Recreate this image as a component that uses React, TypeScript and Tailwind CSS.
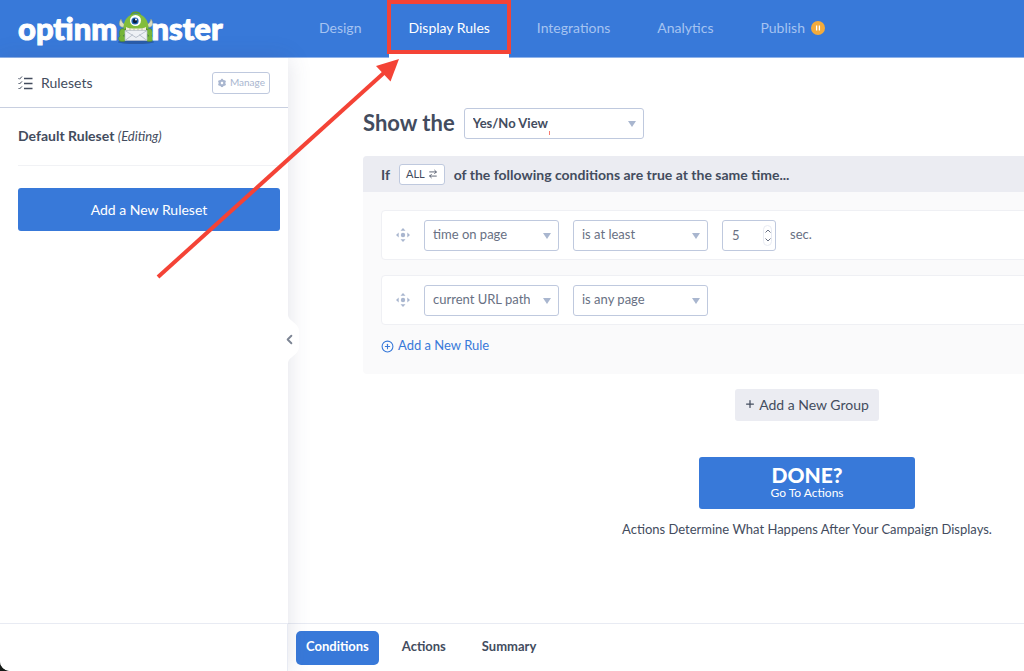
import { useState } from "react";
import type { ReactNode, SelectHTMLAttributes } from "react";
import { LuArrowRightLeft, LuChevronLeft, LuCirclePlus } from "react-icons/lu";
import { FaPlus } from "react-icons/fa6";
import { RiSettings3Fill } from "react-icons/ri";

interface tabProps {
  name: string;
  paused?: boolean;
}

const tabs: tabProps[] = [
  { name: "Design" },
  { name: "Display Rules" },
  { name: "Integrations" },
  { name: "Analytics" },
  { name: "Publish", paused: true },
];

const steps = ["Conditions", "Actions", "Summary"];

const Monster = () => (
  <svg viewBox="0 0 38 34" className="-mr-1 h-[34px] w-[38px] shrink-0" aria-hidden="true">
    <ellipse cx="19" cy="31" rx="18" ry="2" fill="#2a5ca8" />
    <path d="M14 4.500c1-4 8-4 9-1" fill="none" stroke="#5f9e2e" strokeWidth="1.600" strokeLinecap="round" />
    <path d="M4 8c-3 4-2 9 3 8l1-3c-2 0-3-2-4-5zM34 8c3 4 2 9-3 8l-1-3c2 0 3-2 4-5z" fill="#d9dcc0" stroke="#8c9b70" strokeWidth=".5" />
    <path d="M19 3c8 0 12 6 12.500 13 .5 6-1 10-2 12H8.500c-1.500-3-2.500-7-2-12C7 9 11 3 19 3z" fill="#82bd3c" />
    <path d="M8 17c3 3 19 3 22 0l1 8H7z" fill="#5d9430" />
    <path d="M9 16c3 2 17 2 20 0v3c-3 2-17 2-20 0z" fill="#f2eedb" />
    <path d="M13 17v3M17 17.500v3M21 17.500v3M25 17v3" stroke="#a9ad8c" strokeWidth=".7" />
    <circle cx="18.500" cy="9.500" r="5.500" fill="#fff" />
    <circle cx="18" cy="10" r="3.600" fill="#1d61b5" />
    <circle cx="18" cy="10" r="2.200" fill="#0b1d38" />
    <circle cx="19" cy="8.500" r="1" fill="#fff" />
    <path d="M4 18c3-1 5 1 5 4l-3 3c2 0 4 2 3 4-1 2-6 2-7 0s0-3 1-4c-1-2-1-5 1-7zM34 18c-3-1-5 1-5 4l3 3c-2 0-4 2-3 4 1 2 6 2 7 0s0-3-1-4c1-2 1-5-1-7z" fill="#76b539" stroke="#4a822b" strokeWidth=".6" />
    <path d="M8 19.500h22v10H8z" fill="#eef1f5" stroke="#b5bdca" strokeWidth=".7" />
    <path d="M8 29.500l8-6M30 29.500l-8-6M8 19.500l11 7 11-7" fill="none" stroke="#b5bdca" strokeWidth=".9" />
  </svg>
);

const RulesIcon = () => (
  <svg viewBox="0 0 15 14" className="h-[14px] w-[15px]" fill="none" stroke="#434c5e" aria-hidden="true">
    <path d="M6 2.500h8.500M6 7.500h8.500M6 12.500h8.500" strokeWidth="1.500" />
    <path d="M.5 2.200l1 1L4 .5M.5 7l1 1L4 5.400M.5 12l1 1L4 10.400" strokeWidth="1" />
  </svg>
);

const MoveIcon = () => (
  <svg viewBox="0 0 14 14" className="h-[14px] w-[14px]" fill="#a9b6cf" aria-hidden="true">
    <circle cx="7" cy="7" r="2.200" />
    <path d="M7 0l2.500 2.700H4.500zM7 14l2.500-2.700H4.500zM0 7l2.700-2.500v5zM14 7l-2.700-2.500v5z" />
  </svg>
);

const Select = ({ className, children, ...props }: SelectHTMLAttributes<HTMLSelectElement>) => (
  <div className={`relative ${className}`}>
    <select
      {...props}
      className="h-[31px] w-full appearance-none rounded-[3px] border border-[#bfc9de] bg-white pr-7 pl-2 text-inherit"
    >
      {children}
    </select>
    <svg viewBox="0 0 8 6" className="pointer-events-none absolute top-[13px] right-2 h-[6px] w-[8px]" fill="#a9b6cf" aria-hidden="true">
      <path d="M0 0h8L4 6z" />
    </svg>
  </div>
);

const Rule = ({ children }: { children: ReactNode }) => (
  <li className="flex h-[50px] items-center rounded-[4px] border border-[#eff0f4] bg-white pl-[14px]">
    <button type="button" aria-label="Move rule" className="mr-[14px]">
      <MoveIcon />
    </button>
    {children}
  </li>
);

const App = () => {
  const [seconds, setSeconds] = useState(5);

  return (
    <div className="bg-[#151a17] font-[Lato,sans-serif] text-[#434c5e]">
      <div className="relative flex min-h-screen flex-col overflow-hidden rounded-bl-[10px] bg-white">
        <header className="flex h-[58px] items-stretch border-b border-[#8fb3ea] bg-[#3879d9] pl-[18px]">
          <a href="#home" aria-label="OptinMonster" className="flex w-[282px] items-center pb-px text-[31px] leading-none font-black text-white [-webkit-text-stroke:1px_white]">
            <span>optinm</span>
            <Monster />
            <span>nster</span>
          </a>
          <nav className="flex gap-[9px]">
            {tabs.map((tab) => (
              <a
                key={tab.name}
                href="#tab"
                className={
                  tab.name === "Display Rules"
                    ? "relative -mb-px flex items-center border-b-4 border-white px-[19px] pt-px text-[14px] text-white"
                    : "flex items-center px-[19px] pb-[2px] text-[14px] text-[#a5c3f1]"
                }
              >
                {tab.name}
                {tab.paused && (
                  <svg viewBox="0 0 14 14" className="ml-[6px] h-[14px] w-[14px]" aria-hidden="true">
                    <circle cx="7" cy="7" r="7" fill="#f3ab3c" />
                    <path d="M5.600 4.500v5M8.400 4.500v5" stroke="#fff" strokeWidth="1.300" />
                  </svg>
                )}
                {tab.name === "Display Rules" && (
                  <span className="absolute -inset-x-[2px] inset-y-0 border-4 border-[#f44336]" />
                )}
              </a>
            ))}
          </nav>
        </header>

        <div className="flex flex-1">
          <aside className="relative z-10 flex w-72 shrink-0 flex-col bg-white shadow-[0_0_22px_rgba(67,76,120,0.16)]">
            <div className="flex h-[50px] items-center border-b border-[#c8cfe0] px-[18px]">
              <RulesIcon />
              <h2 className="ml-2 text-[14px]">Rulesets</h2>
              <button type="button" className="ml-auto flex h-[22px] items-center gap-[3px] rounded-[3px] border border-[#bfc9de] px-1 text-[10px] text-[#a9b6cf]">
                <RiSettings3Fill size={10} />
                Manage
              </button>
            </div>
            <div className="pr-2 pl-[18px]">
              <p className="border-b border-[#f1f2f5] pb-px text-[14px] leading-[55px] font-bold">
                Default Ruleset <em className="text-[13px] font-normal">(Editing)</em>
              </p>
              <button type="button" className="mt-[22px] h-[43px] w-full rounded-[3px] bg-[#3879d9] pb-px text-[14px] text-white">
                Add a New Ruleset
              </button>
            </div>
            <button type="button" aria-label="Collapse sidebar" className="absolute top-[257px] -right-[11px] h-[48px] w-[18px]">
              <svg viewBox="0 0 18 48" className="h-[48px] w-[18px]" fill="#fff" aria-hidden="true">
                <path d="M0 0h7c0 6 11 8 11 16v16c0 8-11 10-11 16H0z" />
              </svg>
              <LuChevronLeft size={15} strokeWidth={3} className="absolute top-[17px] left-px text-[#7d8594]" />
            </button>
            <div className="mt-auto h-12 border-t border-r border-[#e8ebf3]" />
          </aside>

          <div className="flex min-w-0 flex-1 flex-col">
            <main className="flex-1 overflow-hidden px-[75px] pt-[50px]">
              <div className="min-w-[888px]">
                <div className="flex items-center gap-[9px]">
                  <h1 className="pb-px text-[22px] leading-[28px] font-bold">Show the</h1>
                  <Select aria-label="View" className="w-[180px] text-[13px] font-bold">
                    <option>Yes/No View</option>
                  </Select>
                </div>

                <section className="mt-[17px] rounded-[4px] bg-[#fafafb] pb-[18px]">
                  <h2 className="flex h-9 items-center rounded-t-[4px] bg-[#ebecf2] pl-[18px] text-[14px] font-bold">
                    If
                    <button type="button" className="mr-[9px] ml-[9px] flex h-[21px] items-center gap-[3px] rounded-[3px] border border-[#bfc9de] bg-white px-[6px] text-[11px] font-normal">
                      ALL <LuArrowRightLeft size={10} />
                    </button>
                    of the following conditions are true at the same time...
                  </h2>
                  <ul className="mt-[18px] flex flex-col gap-[15px] pl-[18px] text-[13px] text-[#687083]">
                    <Rule>
                      <Select aria-label="Condition" className="mr-[14px] w-[135px]">
                        <option>time on page</option>
                      </Select>
                      <Select aria-label="Operator" className="mr-[14px] w-[135px]">
                        <option>is at least</option>
                      </Select>
                      <div className="relative mr-[14px] w-[54px]">
                        <input
                          type="number"
                          aria-label="Seconds"
                          value={seconds}
                          onChange={(e) => setSeconds(Number(e.target.value))}
                          className="h-[31px] w-full appearance-none rounded-[3px] border border-[#bfc9de] bg-white pl-[9px] [appearance:textfield]"
                        />
                        <div className="absolute top-[5px] right-1 flex h-[21px] w-[9px] flex-col items-center justify-between rounded-full border border-[#e8ebf3] py-[3px]">
                          <button type="button" aria-label="More" onClick={() => setSeconds(seconds + 1)}>
                            <svg viewBox="0 0 6 4" className="h-1 w-[6px]" fill="none" stroke="#687083">
                              <path d="M.5 3.500L3 1l2.500 2.500" />
                            </svg>
                          </button>
                          <button type="button" aria-label="Less" onClick={() => setSeconds(seconds - 1)}>
                            <svg viewBox="0 0 6 4" className="h-1 w-[6px]" fill="none" stroke="#687083">
                              <path d="M.5 .5L3 3 5.500 .5" />
                            </svg>
                          </button>
                        </div>
                      </div>
                      sec.
                    </Rule>
                    <Rule>
                      <Select aria-label="Condition" className="mr-[14px] w-[135px]">
                        <option>current URL path</option>
                      </Select>
                      <Select aria-label="Operator" className="w-[135px]">
                        <option>is any page</option>
                      </Select>
                    </Rule>
                  </ul>
                  <button type="button" className="mt-[11px] ml-[18px] flex h-5 items-center gap-1 text-[13px] text-[#3879d9]">
                    <LuCirclePlus size={13} />
                    Add a New Rule
                  </button>
                </section>

                <div className="mt-[15px] flex flex-col items-center">
                  <button type="button" className="flex h-8 items-center gap-1 rounded-[3px] bg-[#ebecf2] px-[10px] pb-[2px] text-[14px]">
                    <FaPlus size={10} />
                    Add a New Group
                  </button>
                  <button type="button" className="mt-9 flex h-[52px] w-[216px] flex-col items-center justify-center rounded-[3px] bg-[#3879d9] pb-px text-white">
                    <span className="text-[21px] leading-[20px] font-black">DONE?</span>
                    <span className="text-[12px] leading-[15px]">Go To Actions</span>
                  </button>
                  <p className="mt-[11px] text-[13px] leading-[18px]">Actions Determine What Happens After Your Campaign Displays.</p>
                </div>
              </div>
            </main>

            <footer className="flex h-12 items-center gap-[10px] border-t border-[#e8ebf3] pl-2 text-[13px] font-bold">
              {steps.map((step) => (
                <button
                  key={step}
                  type="button"
                  className={
                    step === "Conditions"
                      ? "h-[34px] rounded-[5px] bg-[#3879d9] px-[10px] pb-px text-white"
                      : "h-[34px] px-[13px] pb-px"
                  }
                >
                  {step}
                </button>
              ))}
            </footer>
          </div>
        </div>

        <svg viewBox="0 0 244 220" className="pointer-events-none absolute top-[59px] left-[156px] z-20 h-[220px] w-[244px]" aria-hidden="true">
          <path d="M2 218L230 12" stroke="#f44336" strokeWidth="4" />
          <path d="M243 0L220 7l14.500 15.500z" fill="#f44336" />
        </svg>
        <span className="pointer-events-none absolute top-[131px] left-[549px] z-20 h-1 w-px bg-[#f77b70]" />
      </div>
    </div>
  );
};

export default App;
